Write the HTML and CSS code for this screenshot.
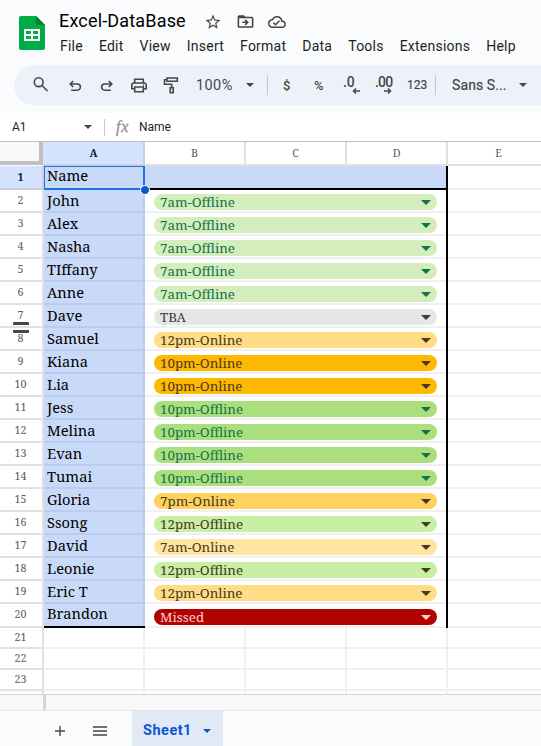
FILE: index.html
```html
<!DOCTYPE html>
<html lang="en">
<head>
<meta charset="utf-8">
<title>Excel-DataBase</title>
<link rel="stylesheet" href="styles.css">
</head>
<body>
<header class="top">
  <svg class="logo" viewBox="0 0 26 34"><path fill="#00ac47" d="M2 0h15l9 9v23a2 2 0 0 1-2 2H2a2 2 0 0 1-2-2V2a2 2 0 0 1 2-2z"/><path fill="#00832d" d="M17 0l9 9h-9z"/><path fill="#fff" fill-rule="evenodd" d="M5 13h16v12H5zM7 15v3h5v-3zM14 15v3h5v-3zM7 20v3h5v-3zM14 20v3h5v-3z"/></svg>
  <div class="heading">
    <div class="title-row">
      <h1>Excel-DataBase</h1>
      <svg class="star" viewBox="0 0 24 24"><path d="M22 9.24l-7.19-.62L12 2 9.19 8.63 2 9.24l5.46 4.73L5.82 21 12 17.27 18.18 21l-1.63-7.03zM12 15.4l-3.76 2.27 1-4.28-3.32-2.88 4.38-.38L12 6.1l1.71 4.04 4.38.38-3.32 2.88 1 4.28z"/></svg>
      <svg class="folder" viewBox="0 0 24 24"><path d="M20 6h-8l-2-2H4a2 2 0 0 0-2 2v12a2 2 0 0 0 2 2h16a2 2 0 0 0 2-2V8a2 2 0 0 0-2-2zm0 12H4V8h16zM12.200 17l4-4-4-4-1.400 1.400 1.600 1.600H8v2h4.400l-1.600 1.600z"/></svg>
      <svg class="cloud" viewBox="0 0 24 24"><path d="M19.350 10.040A7.490 7.490 0 0 0 12 4C9.110 4 6.600 5.640 5.350 8.040A5.990 5.990 0 0 0 0 14c0 3.310 2.690 6 6 6h13c2.760 0 5-2.240 5-5 0-2.640-2.050-4.780-4.650-4.960zM19 18H6c-2.210 0-4-1.790-4-4 0-2.050 1.530-3.760 3.560-3.970l1.070-.11.500-.95A5.469 5.469 0 0 1 12 6c2.620 0 4.880 1.860 5.390 4.430l.3 1.500 1.530.11A2.980 2.980 0 0 1 22 15c0 1.650-1.350 3-3 3zm-9-3.820l-2.090-2.090L6.500 13.500 10 17l6.010-6.010-1.410-1.410z"/></svg>
    </div>
    <nav class="menu"><span>File</span><span>Edit</span><span>View</span><span>Insert</span><span>Format</span><span>Data</span><span>Tools</span><span>Extensions</span><span>Help</span></nav>
  </div>
</header>
<div class="toolbar">
  <svg class="ic search" viewBox="0 0 18 18"><circle cx="6.700" cy="6.200" r="4.400"/><path d="M10 9.500l5.500 5.500"/></svg>
  <svg class="ic undo" viewBox="0 0 18 18"><path d="M7.200 5L4.200 8l3 3M4.500 8h6.800a3.100 3.100 0 0 1 0 6.200H5.200"/></svg>
  <svg class="ic redo" viewBox="0 0 18 18"><path d="M10.800 5l3 3-3 3M13.500 8H6.700a3.100 3.100 0 0 0 0 6.200h6.100"/></svg>
  <svg class="ic print" viewBox="0 0 18 18"><path d="M4.700 6.500V3.200h8.600v3.300M4.500 12.800H1.800V9a2 2 0 0 1 2-2h10.400a2 2 0 0 1 2 2v3.800h-2.700M4.700 11h8.600v4.800H4.700zM13 9.300h1"/></svg>
  <svg class="ic paint" viewBox="0 0 18 18"><path d="M5 2h10.300v3.300H5zM5 3.700H2.500v4.600h7.200v3M8.200 11.700h3v5h-3z"/></svg>
  <span class="pct100">100%</span><i class="tri"></i><i class="sep"></i>
  <span class="sym dollar">$</span><span class="sym percent">%</span>
  <span class="dec d1"><b>.0</b><svg viewBox="0 0 8 6"><path d="M8 3H1.500M4 .5L1.500 3 4 5.500"/></svg></span>
  <span class="dec d2"><b>.00</b><svg viewBox="0 0 8 6"><path d="M0 3h6.500M4 .5L6.500 3 4 5.500"/></svg></span>
  <span class="sym num">123</span><i class="sep sep2"></i>
  <span class="font">Sans S...</span><i class="tri"></i>
</div>
<div class="formula"><span class="cell">A1</span><i class="tri"></i><i class="fsep"></i><span class="fx">fx</span><span class="value">Name</span></div>
<main class="sheet" id="sheet"><div class="heads"><div class="corner"></div><div class="col on">A</div><div class="col">B</div><div class="col">C</div><div class="col">D</div><div class="col last">E</div></div></main>
<div class="scroll"></div>
<footer>
  <svg class="plus" viewBox="0 0 10 10"><path d="M5 0v10M0 5h10"/></svg>
  <svg class="lines" viewBox="0 0 14 10"><path d="M0 1h14M0 5h14M0 9h14"/></svg>
  <div class="tab">Sheet1<i class="tri"></i></div>
</footer>
<script src="sheet.js"></script>
</body>
</html>
```
FILE: sheet.js
```js
const rows = [
  ['Name', ''],
  ['John', '7am-Offline', 'mint'], ['Alex', '7am-Offline', 'mint'], ['Nasha', '7am-Offline', 'mint'],
  ['TIffany', '7am-Offline', 'mint'], ['Anne', '7am-Offline', 'mint'], ['Dave', 'TBA', 'gray'],
  ['Samuel', '12pm-Online', 'sand'], ['Kiana', '10pm-Online', 'amber'], ['Lia', '10pm-Online', 'amber'],
  ['Jess', '10pm-Offline', 'green'], ['Melina', '10pm-Offline', 'green'], ['Evan', '10pm-Offline', 'green'],
  ['Tumai', '10pm-Offline', 'green'], ['Gloria', '7pm-Online', 'gold'], ['Ssong', '12pm-Offline', 'lime'],
  ['David', '7am-Online', 'cream'], ['Leonie', '12pm-Offline', 'lime'], ['Eric T', '12pm-Online', 'sand'],
  ['Brandon', 'Missed', 'red']
];
const sheet = document.getElementById('sheet');
for (let i = 1; i <= 24; i++) {
  const data = rows[i - 1];
  const row = document.createElement('div');
  row.className = 'row' + (i === 1 ? ' first' : i === 20 ? ' end' : i > 20 ? ' empty' : '');
  let html = `<div class="no">${i < 24 ? i : ''}</div>`;
  if (data) {
    html += `<div class="name">${data[0]}${i === 1 ? '<i class="handle"></i>' : ''}</div><div class="merged">`;
    if (data[1]) html += `<div class="chip ${data[2]}">${data[1]}<i class="tri"></i></div>`;
    html += '</div><div class="e"></div>';
  } else {
    html += '<div class="blank"></div><div class="blank"></div><div class="blank"></div><div class="blank"></div><div class="e"></div>';
  }
  if (i === 7) html += '<i class="grip"></i>';
  row.innerHTML = html;
  sheet.appendChild(row);
}
```
FILE: styles.css
```css
* { box-sizing: border-box; }
body { margin: 0; width: 541px; height: 746px; overflow: hidden; background: #f9fbfd; font-family: Roboto, "Liberation Sans", sans-serif; color: #1f1f1f; display: flex; flex-direction: column; }
svg { display: block; flex: none; }
.top { height: 65px; display: flex; flex: none; }
.logo { width: 26px; height: 34px; margin: 16px 14px 0 19px; }
.title-row { display: flex; height: 36px; padding-top: 9px; }
h1 { margin: 0; width: 145px; font-size: 18px; font-weight: 400; line-height: 24px; letter-spacing: .17px; color: #000; white-space: nowrap; }
.title-row svg { fill: #444746; }
.star { width: 18px; height: 18px; margin-top: 4px; }
.folder { width: 19px; height: 19px; margin: 3px 0 0 14px; }
.cloud { width: 18px; height: 18px; margin: 4px 0 0 13px; }
.menu { display: flex; gap: 16px; padding-left: 1px; font-size: 14px; line-height: 20px; letter-spacing: .235px; white-space: nowrap; }
.toolbar { height: 40px; flex: none; margin-left: 14px; background: #edf2fa; border-radius: 20px 0 0 20px; display: flex; align-items: center; padding-left: 18px; color: #444746; }
.ic { width: 18px; height: 18px; fill: none; stroke: #444746; stroke-width: 1.6; margin-right: 14px; }
.search { margin-right: 16px; }
.paint { margin-right: 16px; }
.tri { flex: none; width: 0; height: 0; border: 4px solid transparent; border-top-color: currentColor; border-bottom: 0; }
.pct100 { width: 50px; font-size: 14.5px; letter-spacing: .4px; }
.sep { width: 1px; height: 20px; background: #c7c7c7; margin-left: 13px; }
.sym { font-size: 13px; font-weight: 500; white-space: nowrap; }
.dollar { margin-left: 15px; width: 31px; font-size: 13px; }
.percent { width: 29px; font-weight: 500; }
.dec { width: 32px; height: 20px; position: relative; font-size: 14px; line-height: 14px; }
.dec b { font-weight: 500; }
.dec svg { position: absolute; width: 8px; height: 6px; left: 9px; top: 13px; fill: none; stroke: #444746; stroke-width: 1.5; }
.num { width: 28px; font-size: 12px; font-weight: 400; -webkit-text-stroke: .2px; }
.d1 { letter-spacing: -.2px; }
.d2 { letter-spacing: -.8px; }
.sep2 { margin-left: 0; margin-right: 16px; }
.font { width: 67px; font-size: 14px; letter-spacing: .1px; -webkit-text-stroke: .2px; white-space: nowrap; }
.formula { margin-top: 8px; height: 28px; flex: none; background: #fff; display: flex; align-items: center; font-size: 12px; padding-left: 12px; color: #1f1f1f; }
.cell { width: 72px; }
.formula .tri { color: #444746; }
.fsep { width: 1px; height: 17px; background: #c7c7c7; margin-left: 12px; }
.fx { width: 34px; padding-left: 11px; font: italic 16px "Liberation Serif", serif; letter-spacing: .8px; -webkit-text-stroke: .3px; color: #8f8f8f; }
.sheet { height: 553px; flex: none; overflow: hidden; border-top: 1px solid #c0c0c0; background: #fff; font-family: "Noto Serif", "DejaVu Serif Condensed", "DejaVu Serif", serif; }
.heads { display: flex; height: 24px; }
.corner { width: 43px; height: 23px; flex: none; background: #f8f9fa; border-right: 4px solid #c0c0c0; border-bottom: 4px solid #c0c0c0; }
.col { width: 101px; flex: none; border-right: 2px solid #e1e1e1; box-shadow: inset 0 -2px #e1e1e1; text-align: center; font-size: 10.67px; line-height: 23px; color: #575b5f; }
.on { width: 102px; padding-left: 1px; background: #d3e3fd; border-color: #c8cfdc; box-shadow: inset 0 -2px #c8cfdc; font-weight: bold; color: #041e49; }
.last { border-right: 0; }
.row { display: flex; height: 23px; position: relative; }
.no { width: 44px; flex: none; border-right: 2px solid #e1e1e1; border-bottom: 2px solid #e1e1e1; text-align: center; padding-right: 1px; font-size: 10.67px; line-height: 20px; color: #575b5f; }
.name { width: 101px; flex: none; position: relative; padding-left: 3px; background: #c9daf8; border-right: 2px solid #bacbed; border-bottom: 2px solid #bacbed; font-size: 14.67px; line-height: 20px; color: #000; white-space: nowrap; }
.merged { width: 303px; flex: none; padding: 4px 0 0 9px; border-right: 2px solid #000; box-shadow: inset 0 -2px #f0f0f0; }
.e { flex: 1; border-bottom: 2px solid #f0f0f0; }
.chip { display: flex; align-items: center; justify-content: space-between; width: 283px; height: 16px; padding: 0 6px 0 6px; border-radius: 8px; font-size: 13.33px; line-height: 16px; }
.chip .tri { border-width: 5px 5px 0; }
.mint { background: #d4edbc; color: #11734b; }
.gray { background: #e6e6e6; color: #3d3d3d; }
.sand { background: #ffdc85; color: #473821; }
.amber { background: #ffb800; color: #473821; }
.green { background: #abdf7d; color: #11734b; }
.gold { background: #ffd25f; color: #473821; }
.lime { background: #c8efa3; color: #473821; }
.cream { background: #ffe5a0; color: #473821; }
.red { background: #b10202; color: #ffcfc9; }
.first { height: 24px; z-index: 1; }
.first .no { background: #d3e3fd; border-color: #c8cfdc; font-weight: bold; color: #041e49; line-height: 22px; }
.first .name { border: 2px solid #1a73e8; border-width: 1px 2px 2px 1px; padding-left: 2px; line-height: 17px; }
.first .merged { background: #c9daf8; box-shadow: inset 0 -2px #000; }
.handle { position: absolute; width: 10px; height: 10px; right: -7px; bottom: -7px; border: 1px solid #fff; border-radius: 50%; background: #0b57d0; }
.end { height: 24px; }
.end .name { border-right: 0; border-bottom-color: #000; box-shadow: inset -2px 0 #bacbed; line-height: 18px; }
.end .merged { padding-top: 5px; }
.end .no { line-height: 21px; }
.empty { height: 21px; }
.empty .no { line-height: 19px; }
.blank { width: 101px; flex: none; border-right: 2px solid #f0f0f0; border-bottom: 2px solid #f0f0f0; }
.grip { position: absolute; left: 13px; top: 17px; width: 16px; height: 11px; border: solid #444746; border-width: 3px 0; border-radius: 1px; z-index: 2; }
.scroll { height: 17px; flex: none; background: #f8f8f8; border-top: 1px solid #d5d5d5; border-bottom: 1px solid #e1e3e6; }
.scroll::before { content: ""; display: block; width: 3px; height: 15px; margin-left: 43px; background: #d5d5d5; }
footer { height: 35px; flex: none; display: flex; align-items: center; background: #f9fbfd; }
footer svg { fill: none; stroke: #444746; stroke-width: 1.4; }
.plus { width: 10px; height: 10px; margin: 4px 0 0 55px; }
footer .lines { width: 14px; height: 10px; margin: 4px 0 0 28px; stroke-width: 1.5; }
.tab { width: 91px; height: 35px; margin-left: 25px; padding: 4px 0 0 11px; display: flex; align-items: center; gap: 11px; background: #e1e9f7; color: #0b57d0; font-size: 14.5px; font-weight: 700; letter-spacing: .5px; }
```
